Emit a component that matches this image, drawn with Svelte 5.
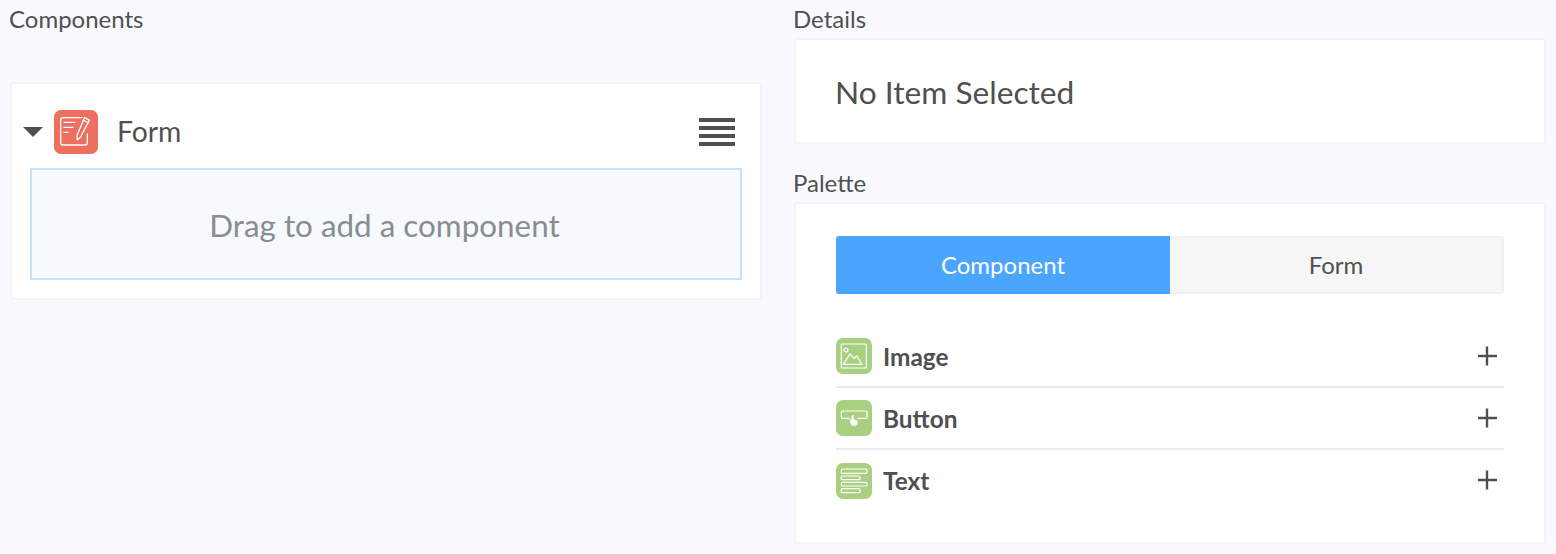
<script>
	const items = [
		{ name: 'Image', icon: 'image' },
		{ name: 'Button', icon: 'button' },
		{ name: 'Text', icon: 'text' }
	];
</script>

<div class="builder">
	<section class="left">
		<h2 class="label">Components</h2>
		<div class="card form-card">
			<div class="form-head">
				<span class="caret"></span>
				<span class="form-icon">
					<svg width="44" height="44" viewBox="0 0 44 44" fill="none" stroke="#fff" stroke-width="1.300" stroke-linecap="round" stroke-linejoin="round">
						<path d="M28 7.700H9a2.300 2.300 0 0 0-2.300 2.300v22.700a2.300 2.300 0 0 0 2.300 2.300h22a2.300 2.300 0 0 0 2.300-2.300V24" />
						<path d="M10 12.300h11M10 17.300h9M10 22.300h4" />
						<path d="M30.500 7.500l4.800 2.600-8.800 17.200-3.300 2.400-.2-4.300z" />
						<path d="M29.300 10.300l4.700 2.500" />
					</svg>
				</span>
				<span class="form-title">Form</span>
				<span class="menu"><i></i><i></i><i></i><i></i></span>
			</div>
			<div class="dropzone">Drag to add a component</div>
		</div>
	</section>

	<section class="right">
		<h2 class="label">Details</h2>
		<div class="card details">No Item Selected</div>

		<h2 class="label palette-label">Palette</h2>
		<div class="card palette">
			<div class="tabs">
				<button class="tab active">Component</button>
				<button class="tab">Form</button>
			</div>
			<ul class="items">
				{#each items as item}
					<li class="item">
						<span class="item-icon">
							<svg width="36" height="36" viewBox="0 0 36 36" fill="none" stroke="#fff" stroke-width="1.200" stroke-linecap="round" stroke-linejoin="round">
								{#if item.icon === 'image'}
									<rect x="5.300" y="6" width="25" height="24" rx="1" />
									<circle cx="10" cy="12" r="2" />
									<path d="M7.300 26.300L14 16l4.300 4.300 2.400-2.300L26 26.300z" />
								{:else if item.icon === 'button'}
									<path d="M13 18.300H6.300a1 1 0 0 1-1-1V12a1 1 0 0 1 1-1H30a1 1 0 0 1 1 1v5.300a1 1 0 0 1-1 1h-8" />
									<path d="M14 19.500l1.800 1v-4.300c0-1.300 1.700-1.300 1.700 0v3.300l3 1c.8.300 1 .9.900 1.700-.2 1.800-.9 3.300-2.400 3.300h-2.500c-1.200 0-1.500-1.500-2.500-6z" fill="#fff" stroke-width=".6" />
								{:else}
									<rect x="5.300" y="6" width="25.700" height="4.300" rx="1" />
									<rect x="5.300" y="13" width="18.700" height="3.700" rx="1" />
									<rect x="5.300" y="19.300" width="25.700" height="3.700" rx="1" />
									<rect x="5.300" y="25.700" width="18.700" height="4" rx="1" />
								{/if}
							</svg>
						</span>
						<span class="item-name">{item.name}</span>
						<svg class="plus" width="20" height="20" viewBox="0 0 20 20" stroke="#505050" stroke-width="2.400">
							<path d="M1 10h19M10 .5v19" />
						</svg>
					</li>
				{/each}
			</ul>
		</div>
	</section>
</div>

<style>
	:global(body) {
		background: #f9f9ff;
	}

	.builder {
		display: grid;
		grid-template-columns: 752px 752px;
		column-gap: 32px;
		padding: 0 10px;
		height: 554px;
		box-sizing: border-box;
		font-family: Lato, sans-serif;
		color: #505050;
	}

	.label {
		margin: 0 0 0 -1px;
		font-size: 24px;
		font-weight: 400;
		line-height: 38px;
		height: 38px;
	}

	.left .label {
		margin-top: 0;
		margin-bottom: 44px;
	}

	.card {
		background: #fff;
		border: 2px solid #f4f4f6;
		border-radius: 3px;
		box-sizing: border-box;
	}

	.form-card {
		height: 218px;
		padding: 0 18px;
	}

	.form-head {
		display: flex;
		align-items: center;
		height: 84px;
		padding-top: 12px;
		box-sizing: border-box;
	}

	.caret {
		width: 0;
		height: 0;
		margin-left: -7px;
		margin-right: 11px;
		border-left: 10px solid transparent;
		border-right: 10px solid transparent;
		border-top: 10px solid #505050;
	}

	.form-icon {
		display: flex;
		width: 44px;
		height: 44px;
		border-radius: 7px;
		background: #ed6f5f;
	}

	.form-title {
		margin: -2px 0 0 19px;
		font-size: 28.300px;
		flex: 1;
	}

	.menu {
		display: flex;
		flex-direction: column;
		gap: 4px;
		width: 36px;
		margin-right: 7px;
	}

	.menu i {
		display: block;
		height: 4px;
		background: #505050;
	}

	.dropzone {
		height: 112px;
		box-sizing: border-box;
		padding: 1px 3px 0 0;
		border: 2px solid #c7e2fb;
		background: #f6faff;
		color: #8a8c8e;
		font-size: 31.400px;
		display: flex;
		align-items: center;
		justify-content: center;
	}

	.details {
		height: 106px;
		padding: 1px 0 0 39px;
		font-size: 31.700px;
		display: flex;
		align-items: center;
	}

	.right .palette-label {
		margin-top: 20px;
		height: 38px;
	}

	.palette {
		height: 342px;
		padding: 32px 40px 0;
	}

	.tabs {
		display: grid;
		grid-template-columns: 334px 1fr;
		height: 58px;
	}

	.tab {
		font-family: inherit;
		font-size: 24px;
		color: #505050;
		background: #f6f6f6;
		border: 2px solid #f1f1f1;
		border-left: none;
		border-radius: 0 3px 3px 0;
		padding: 0 0 2px;
	}

	.tab.active {
		background: #4aa5ff;
		color: #fff;
		border: none;
		border-radius: 3px 0 0 3px;
	}

	.items {
		list-style: none;
		margin: 32px 0 0;
		padding: 0;
	}

	.item {
		display: flex;
		align-items: center;
		height: 62px;
		box-sizing: border-box;
		border-bottom: 2px solid #e9e9e9;
	}

	.item:last-child {
		border-bottom: none;
	}

	.item-icon {
		display: flex;
		width: 36px;
		height: 36px;
		border-radius: 7px;
		background: #a9cf80;
	}

	.item-name {
		flex: 1;
		margin-left: 11px;
		font-size: 24.400px;
		font-weight: 700;
	}

	.item:last-child .item-name,
	.item:last-child .plus {
		margin-top: -2px;
	}

	.plus {
		margin-right: 7px;
	}
</style>
